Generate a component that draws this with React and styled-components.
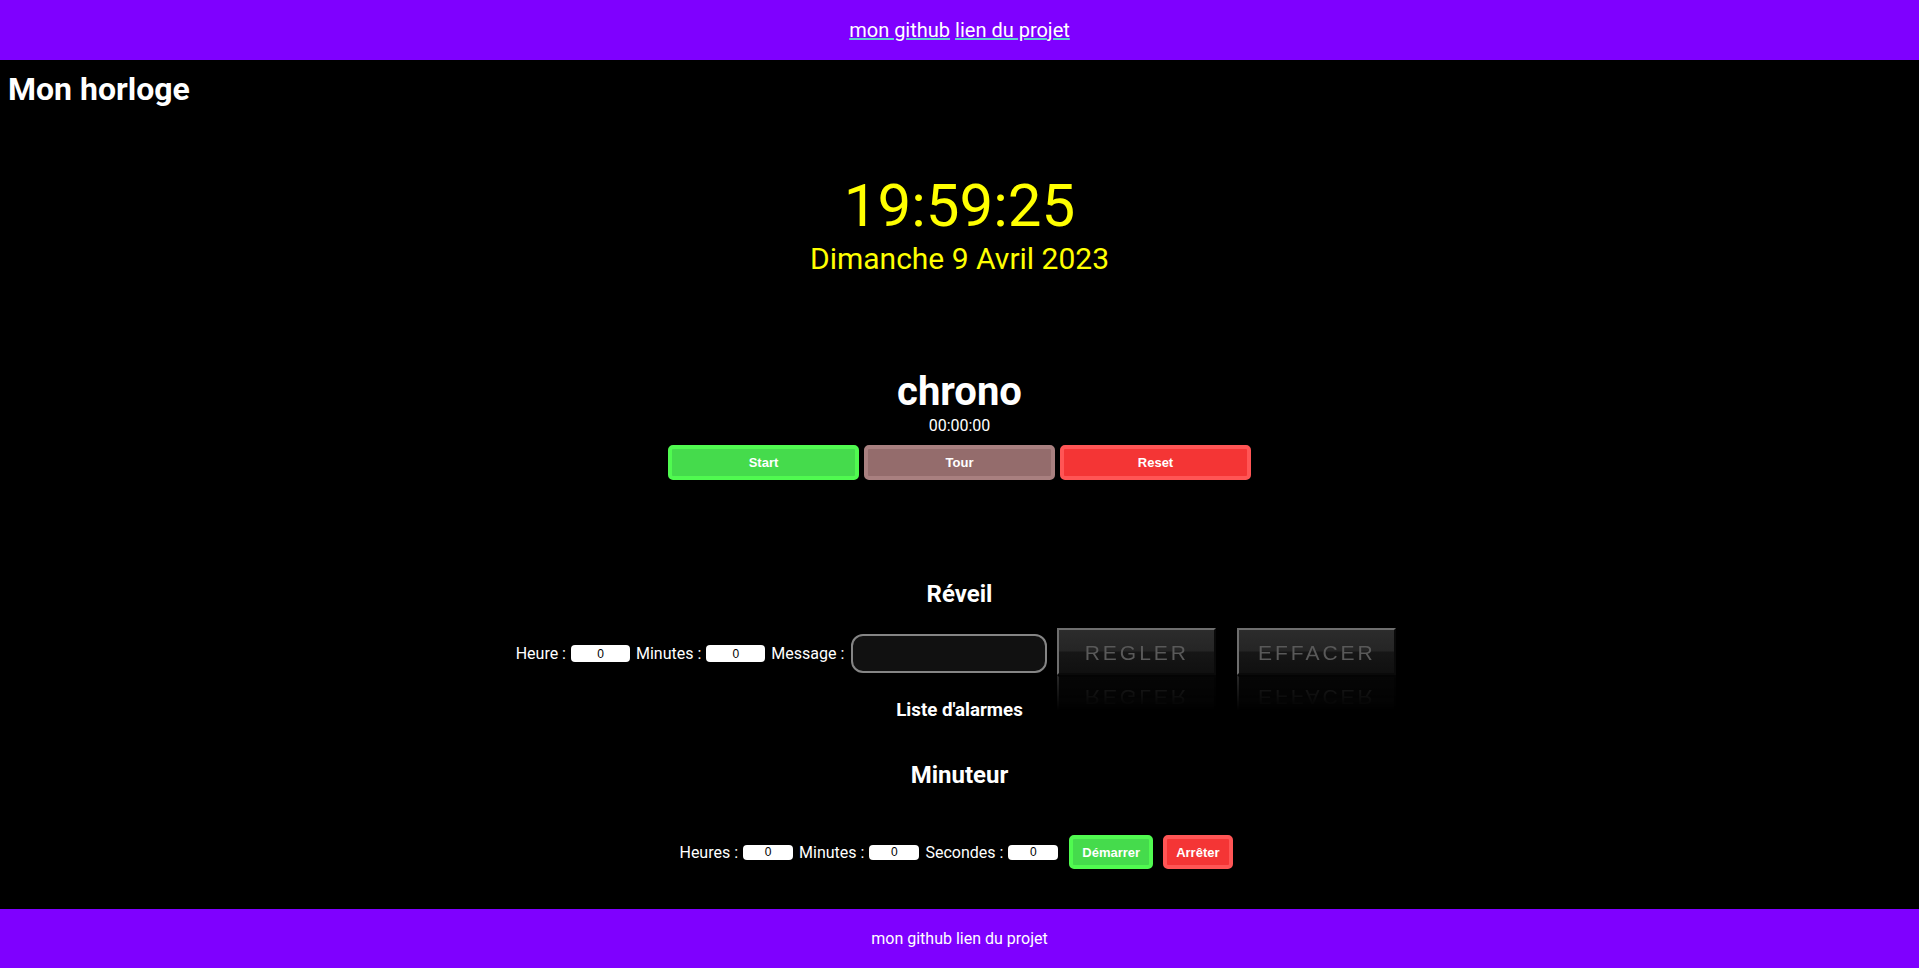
import React from 'react';
import styled, { createGlobalStyle } from "styled-components";

const GlobalStyle = createGlobalStyle`
  body {
    margin: 0;
    background: #000;
    color: #fff;
    font-family: Roboto, "Liberation Sans", sans-serif;
  }
`;

const Page = styled.div`
  min-height: 100vh;
  display: flex;
  flex-direction: column;
`;

const Bar = styled.header`
  height: ${props => props.h}px;
  flex: 0 0 auto;
  background: #7f00ff;
  display: flex;
  align-items: center;
  justify-content: center;
  font-size: ${props => props.size}px;
`;

const TopLink = styled.a`
  color: #fff;
  text-decoration: underline;
  text-decoration-color: #5fcfcf;
  text-decoration-thickness: 2px;
  margin: 0 2.5px;
`;

const Main = styled.main`
  flex: 1;
  display: flex;
  flex-direction: column;
  align-items: center;
`;

const Title = styled.h1`
  align-self: stretch;
  margin: 10px 0 0;
  padding: 0 8px;
  font-size: 32px;
  font-weight: 700;
`;

const Time = styled.div`
  margin-top: 62px;
  font-size: 60px;
  color: #ffff00;
`;

const DateLine = styled.div`
  margin-top: 0;
  font-size: 30px;
  color: #ffff00;
`;

const Heading = styled.h2`
  margin: ${props => props.top}px 0 0;
  font-size: ${props => props.size}px;
  font-weight: 700;
`;

const Counter = styled.div`
  margin-top: 1px;
  font-size: 16px;
`;

const ButtonRow = styled.div`
  margin-top: ${props => props.top}px;
  display: flex;
  align-items: center;
  gap: ${props => props.gap}px;
`;

const palette = {
  green: { bg: "#45db4c", border: "#50fa50" },
  brown: { bg: "#946c6c", border: "#a98080" },
  red: { bg: "#f43535", border: "#ff5555" },
};

const ColorButton = styled.button`
  box-sizing: border-box;
  width: ${props => props.w ? props.w + "px" : "auto"};
  height: ${props => props.h}px;
  padding: 0 9px;
  background: ${props => palette[props.tone].bg};
  border: 4px solid ${props => palette[props.tone].border};
  border-radius: 5px;
  color: #fff;
  font-family: "Liberation Sans", Arial, sans-serif;
  font-size: 13px;
  font-weight: 700;
`;

const FormRow = styled.div`
  margin-top: ${props => props.top}px;
  padding-right: 7px;
  display: flex;
  align-items: center;
  font-size: 16px;
`;

const Label = styled.span`
  margin: 0 5px 0 ${props => props.left || 0}px;
  white-space: nowrap;
`;

const SmallInput = styled.input`
  box-sizing: border-box;
  width: ${props => props.w}px;
  height: ${props => props.h}px;
  padding: 0;
  border: none;
  border-radius: 4px;
  background: #fff;
  color: #000;
  text-align: center;
  font-family: "Liberation Sans", Arial, sans-serif;
  font-size: 12px;
  outline: none;
`;

const MessageInput = styled.input`
  box-sizing: border-box;
  width: 196px;
  height: 39px;
  margin-left: 2px;
  background: #111;
  border: 2px solid #858585;
  border-radius: 12px;
  color: #fff;
  outline: none;
`;

const GlossButton = styled.button`
  box-sizing: border-box;
  width: 159px;
  height: 47px;
  margin: 0 0 4px ${props => props.left}px;
  padding: 3px 0 0;
  background: linear-gradient(#2c2c2c 0%, #252525 48%, #161616 52%, #101010 100%);
  border-style: solid;
  border-width: 2px;
  border-color: #6e6e6e #0a0a0a #0a0a0a #6e6e6e;
  color: #595959;
  font-family: "Liberation Sans", Arial, sans-serif;
  font-size: 21px;
  letter-spacing: 3px;
  -webkit-box-reflect: below 0 linear-gradient(transparent 25%, rgba(255, 255, 255, 0.38));
`;

export default function App() {
  return (
    <Page>
      <GlobalStyle />
      <Bar h={60} size={20}>
        <TopLink href="#">mon github</TopLink>
        <TopLink href="#">lien du projet</TopLink>
      </Bar>

      <Main>
        <Title>Mon horloge</Title>
        <Time>19:59:25</Time>
        <DateLine>Dimanche 9 Avril 2023</DateLine>

        <Heading top={92} size={40}>chrono</Heading>
        <Counter>00:00:00</Counter>
        <ButtonRow top={10} gap={5}>
          <ColorButton tone="green" w={191} h={35}>Start</ColorButton>
          <ColorButton tone="brown" w={191} h={35}>Tour</ColorButton>
          <ColorButton tone="red" w={191} h={35}>Reset</ColorButton>
        </ButtonRow>

        <Heading top={100} size={24}>Réveil</Heading>
        <FormRow top={20}>
          <Label>Heure :</Label>
          <SmallInput w={59} h={17} defaultValue="0" />
          <Label left={6}>Minutes :</Label>
          <SmallInput w={59} h={17} defaultValue="0" />
          <Label left={6}>Message :</Label>
          <MessageInput />
          <GlossButton left={10}>REGLER</GlossButton>
          <GlossButton left={21}>EFFACER</GlossButton>
        </FormRow>
        <Heading top={20} size={18.72}>Liste d'alarmes</Heading>

        <Heading top={40} size={24}>Minuteur</Heading>
        <FormRow top={46}>
          <Label>Heures :</Label>
          <SmallInput w={50} h={15} defaultValue="0" />
          <Label left={6}>Minutes :</Label>
          <SmallInput w={50} h={15} defaultValue="0" />
          <Label left={6}>Secondes :</Label>
          <SmallInput w={50} h={15} defaultValue="0" />
          <ButtonRow top={0} gap={10} style={{ marginLeft: 11 }}>
            <ColorButton tone="green" h={34}>Démarrer</ColorButton>
            <ColorButton tone="red" h={34}>Arrêter</ColorButton>
          </ButtonRow>
        </FormRow>
      </Main>

      <Bar as="footer" h={59} size={16}>
        mon github lien du projet
      </Bar>
    </Page>
  );
}
